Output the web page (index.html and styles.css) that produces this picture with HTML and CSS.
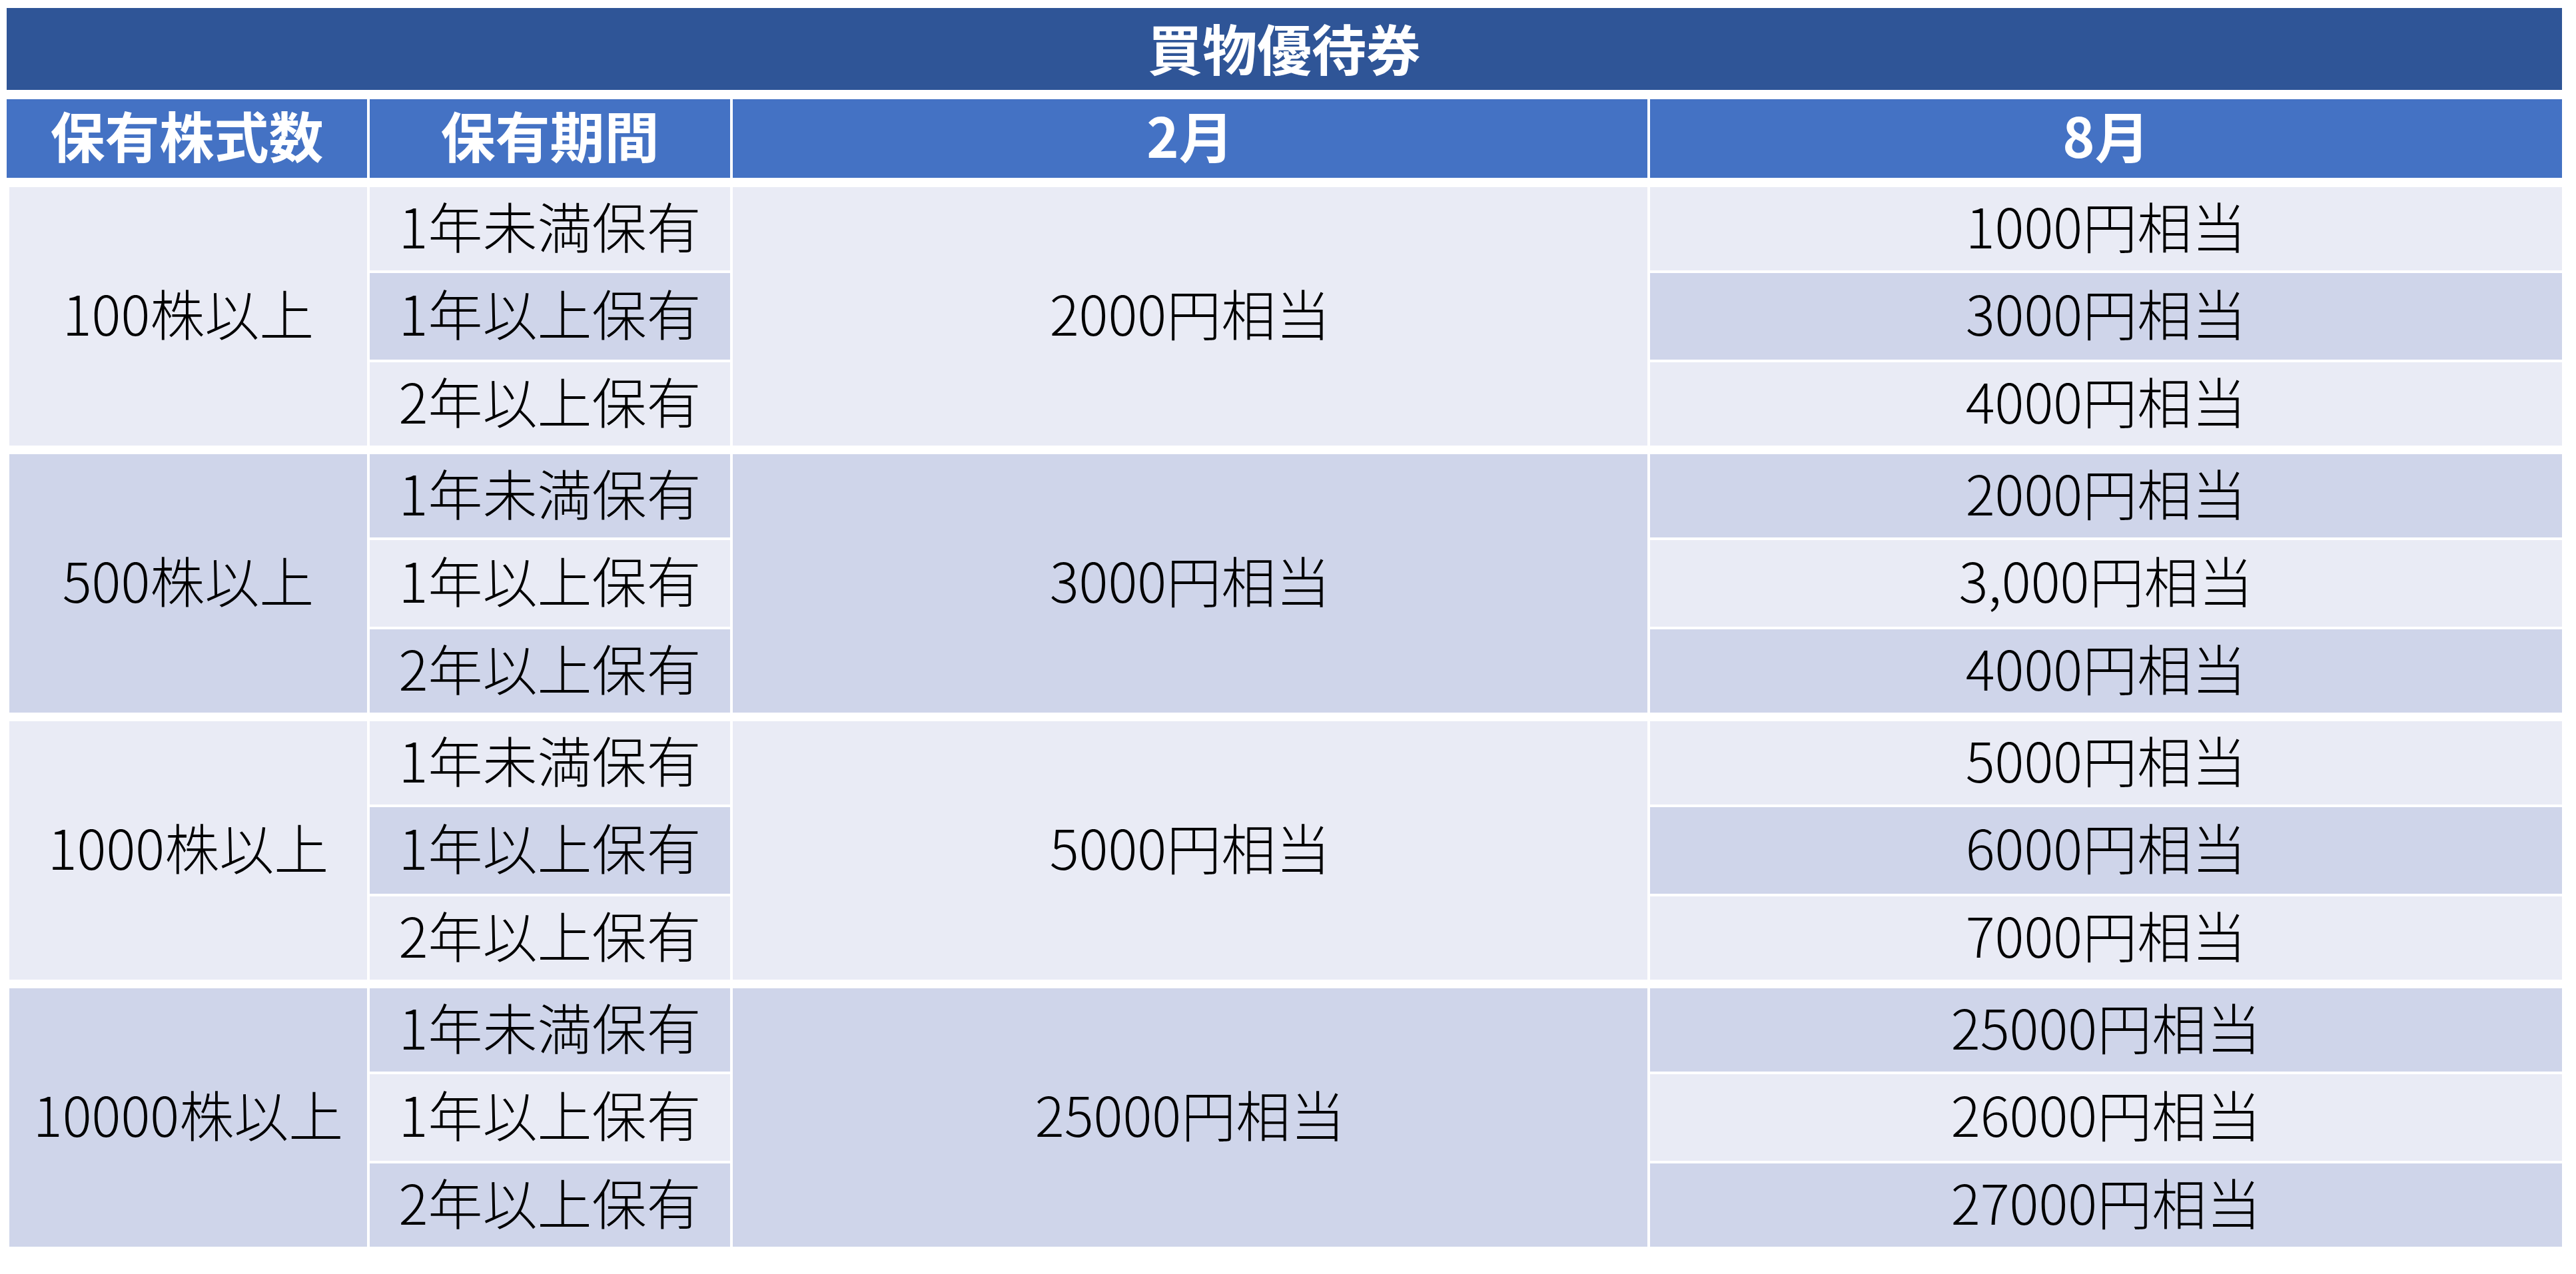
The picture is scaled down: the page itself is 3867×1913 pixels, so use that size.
FILE: index.html
```html
<!DOCTYPE html>
<html lang="ja">
<head>
<meta charset="utf-8">
<title>買物優待券</title>
<link rel="stylesheet" href="styles.css">
</head>
<body>
<div class="sheet">
  <div class="title">買物優待券</div>
  <div class="head">
    <div class="hcell">保有株式数</div>
    <div class="hcell">保有期間</div>
    <div class="hcell">2月</div>
    <div class="hcell">8月</div>
  </div>

  <div class="group odd">
    <div class="cell shares light">100株以上</div>
    <div class="cell p1 light">1年未満保有</div>
    <div class="cell feb light">2000円相当</div>
    <div class="cell a1 light">1000円相当</div>
    <div class="cell p2 dark">1年以上保有</div>
    <div class="cell a2 dark">3000円相当</div>
    <div class="cell p3 light">2年以上保有</div>
    <div class="cell a3 light">4000円相当</div>
  </div>

  <div class="group">
    <div class="cell shares dark">500株以上</div>
    <div class="cell p1 dark">1年未満保有</div>
    <div class="cell feb dark">3000円相当</div>
    <div class="cell a1 dark">2000円相当</div>
    <div class="cell p2 light">1年以上保有</div>
    <div class="cell a2 light">3,000円相当</div>
    <div class="cell p3 dark">2年以上保有</div>
    <div class="cell a3 dark">4000円相当</div>
  </div>

  <div class="group">
    <div class="cell shares light">1000株以上</div>
    <div class="cell p1 light">1年未満保有</div>
    <div class="cell feb light">5000円相当</div>
    <div class="cell a1 light">5000円相当</div>
    <div class="cell p2 dark">1年以上保有</div>
    <div class="cell a2 dark">6000円相当</div>
    <div class="cell p3 light">2年以上保有</div>
    <div class="cell a3 light">7000円相当</div>
  </div>

  <div class="group">
    <div class="cell shares dark">10000株以上</div>
    <div class="cell p1 dark">1年未満保有</div>
    <div class="cell feb dark">25000円相当</div>
    <div class="cell a1 dark">25000円相当</div>
    <div class="cell p2 light">1年以上保有</div>
    <div class="cell a2 light">26000円相当</div>
    <div class="cell p3 dark">2年以上保有</div>
    <div class="cell a3 dark">27000円相当</div>
  </div>
</div>
</body>
</html>
```

FILE: styles.css
```css
html, body {
  margin: 0;
  padding: 0;
  background: #ffffff;
}

.sheet {
  width: 3836px;
  padding: 12px 0 0 10px;
  font-family: "Noto Sans CJK JP", "Noto Sans", sans-serif;
  display: flex;
  flex-direction: column;
}

.title {
  height: 123px;
  background: #2f5597;
  color: #ffffff;
  font-weight: 700;
  font-size: 82px;
  display: flex;
  align-items: center;
  justify-content: center;
  margin-bottom: 14px;
  line-height: 1;
  padding-bottom: 6px;
  box-sizing: border-box;
}

.head,
.group {
  display: grid;
  grid-template-columns: 541px 541px 1373px 1369px;
  column-gap: 4px;
}

.head {
  height: 118px;
  margin-bottom: 14px;
}

.hcell {
  background: #4472c4;
  color: #ffffff;
  font-weight: 700;
  font-size: 82px;
  line-height: 1;
  display: flex;
  align-items: center;
  justify-content: center;
  padding-bottom: 12px;
  box-sizing: border-box;
}

.group {
  grid-template-rows: 125px 130px 125px;
  row-gap: 4px;
  margin-bottom: 13px;
}

.cell {
  display: flex;
  align-items: center;
  justify-content: center;
  font-size: 82px;
  line-height: 1;
  color: #000000;
  font-weight: 300;
  padding-bottom: 12px;
  box-sizing: border-box;
}

.light { background: #e9ebf5; }
.dark { background: #cfd5ea; }

.shares {
  grid-column: 1;
  grid-row: 1 / 4;
  margin-left: 4px;
}
.feb {
  grid-column: 3;
  grid-row: 1 / 4;
}
.p1 { grid-column: 2; grid-row: 1; }
.p2 { grid-column: 2; grid-row: 2; }
.p3 { grid-column: 2; grid-row: 3; }
.a1 { grid-column: 4; grid-row: 1; }
.a2 { grid-column: 4; grid-row: 2; }
.a3 { grid-column: 4; grid-row: 3; }
```
